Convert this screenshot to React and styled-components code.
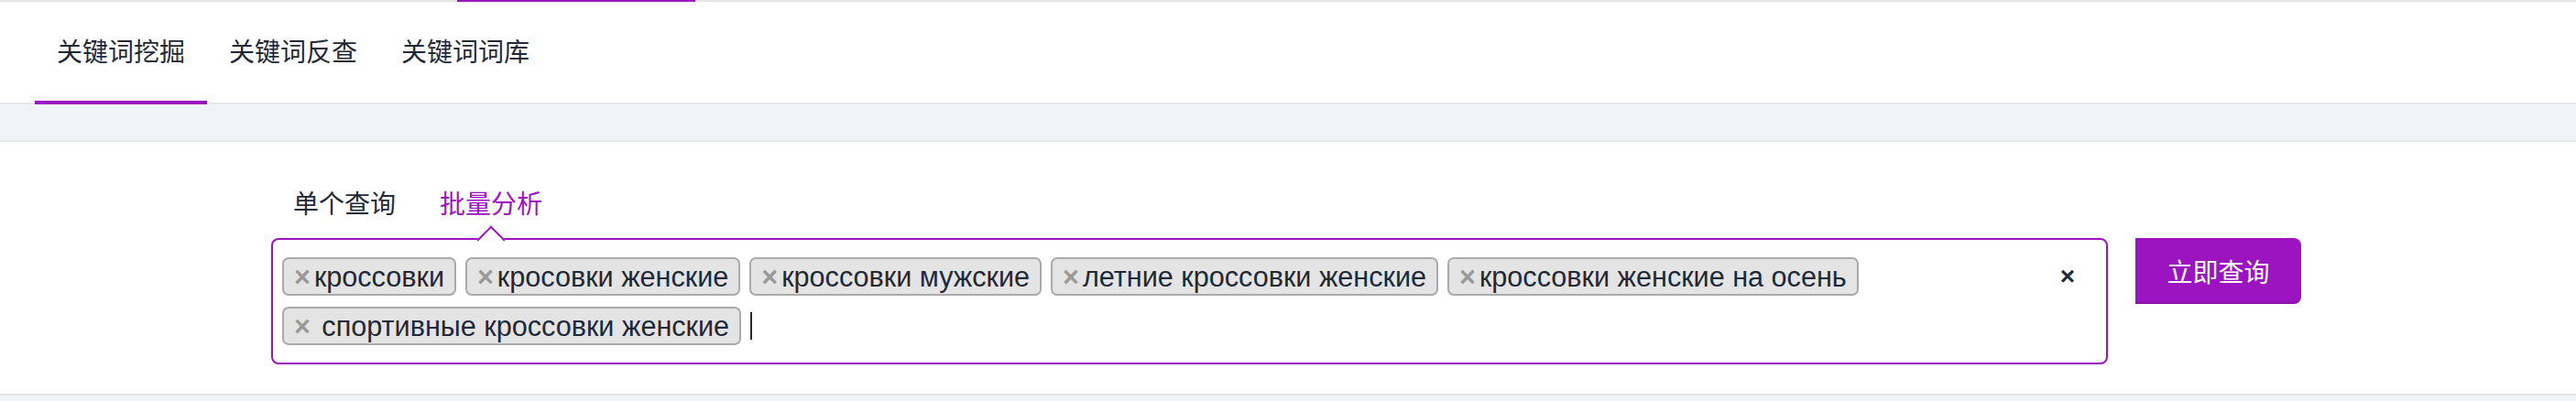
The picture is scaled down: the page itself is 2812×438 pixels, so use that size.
import React from 'react'
import styled, { createGlobalStyle } from 'styled-components'

const PURPLE = '#9c14bf'

const GlobalStyle = createGlobalStyle`
  * { box-sizing: border-box; }
  body {
    margin: 0;
    background: #fff;
    font-family: "Liberation Sans", "Noto Sans CJK SC", sans-serif;
    color: #1f2937;
  }
`

const Page = styled.div`
  display: flex;
  flex-direction: column;
  min-height: 438px;
`

const LoadBar = styled.div`
  height: 2px;
  background: #e6e6e6;
`

const LoadProgress = styled.div`
  height: 2px;
  width: 260px;
  margin-left: 499px;
  background: ${PURPLE};
`

const Header = styled.nav`
  display: flex;
  height: 112px;
  padding-left: 38px;
  border-bottom: 2px solid #e5e7eb;
`

const Tab = styled.div`
  position: relative;
  padding: 0 24px;
  height: 110px;
  line-height: 112px;
  font-size: 28px;
  color: #1f2937;
  cursor: pointer;

  &::after {
    content: '';
    display: ${(props) => (props.active ? 'block' : 'none')};
    position: absolute;
    left: 0;
    right: 0;
    bottom: -2px;
    height: 4px;
    background: ${PURPLE};
  }
`

const Band = styled.div`
  height: 41px;
  background: #f0f3f7;
  border-bottom: 2px solid #e5e7eb;
`

const Content = styled.div`
  display: flex;
  flex-direction: column;
  padding: 49px 0 32px 296px;
`

const SubTabs = styled.div`
  display: flex;
  height: 40px;
  margin-bottom: 16px;
`

const SubTab = styled.div`
  padding: 0 24px;
  line-height: 40px;
  font-size: 28px;
  color: ${(props) => (props.active ? PURPLE : '#1f2937')};
  cursor: pointer;
`

const SearchRow = styled.div`
  display: flex;
  align-items: flex-start;
  gap: 30px;
`

const TagBox = styled.div`
  position: relative;
  display: flex;
  align-items: flex-start;
  width: 2005px;
  padding: 19px 0 19px 10px;
  border: 2px solid ${PURPLE};
  border-radius: 8px;
  background: #fff;

  /* little notch pointing at the active sub tab */
  &::before {
    content: '';
    position: absolute;
    top: -11px;
    left: 227px;
    width: 20px;
    height: 20px;
    background: #fff;
    border-top: 2px solid ${PURPLE};
    border-left: 2px solid ${PURPLE};
    transform: rotate(45deg);
  }
`

const Tags = styled.div`
  flex: 1;
  display: flex;
  flex-wrap: wrap;
  align-items: center;
  gap: 12px 10px;
`

const Tag = styled.div`
  display: flex;
  align-items: center;
  height: 42px;
  padding: 0 11px;
  background: #e4e4e4;
  border: 2px solid #aaa;
  border-radius: 7px;
  font-size: 30.6px;
  color: #1f2937;
  white-space: pre;
`

const Remove = styled.span`
  color: #999;
  font-weight: 700;
  margin-right: 4px;
  cursor: pointer;
`

const Caret = styled.span`
  width: 2px;
  height: 30px;
  background: #1f2937;
`

const Clear = styled.span`
  height: 42px;
  line-height: 42px;
  margin-right: 34px;
  font-size: 28px;
  font-weight: 700;
  color: #1f2937;
  cursor: pointer;
`

const SubmitButton = styled.button`
  width: 181px;
  height: 72px;
  border: none;
  border-radius: 0 8px 8px 0;
  background: ${PURPLE};
  box-shadow: inset 0 -2px 0 rgba(0, 0, 0, 0.12);
  color: #fff;
  font-family: inherit;
  font-size: 28px;
  cursor: pointer;
`

const BottomBand = styled.div`
  flex: 1;
  background: #f0f3f7;
  border-top: 2px solid #e5e7eb;
`

const keywords = [
  'кроссовки',
  'кросовки женские',
  'кроссовки мужские',
  'летние кроссовки женские',
  'кроссовки женские на осень',
  ' спортивные кроссовки женские',
]

const App = () => {
  return (
    <Page>
      <GlobalStyle />
      <LoadBar>
        <LoadProgress />
      </LoadBar>
      <Header>
        <Tab active>关键词挖掘</Tab>
        <Tab>关键词反查</Tab>
        <Tab>关键词词库</Tab>
      </Header>
      <Band />
      <Content>
        <SubTabs>
          <SubTab>单个查询</SubTab>
          <SubTab active>批量分析</SubTab>
        </SubTabs>
        <SearchRow>
          <TagBox>
            <Tags>
              {keywords.map((word) => (
                <Tag key={word}>
                  <Remove>×</Remove>
                  {word}
                </Tag>
              ))}
              <Caret />
            </Tags>
            <Clear>×</Clear>
          </TagBox>
          <SubmitButton>立即查询</SubmitButton>
        </SearchRow>
      </Content>
      <BottomBand />
    </Page>
  )
}

export default App
